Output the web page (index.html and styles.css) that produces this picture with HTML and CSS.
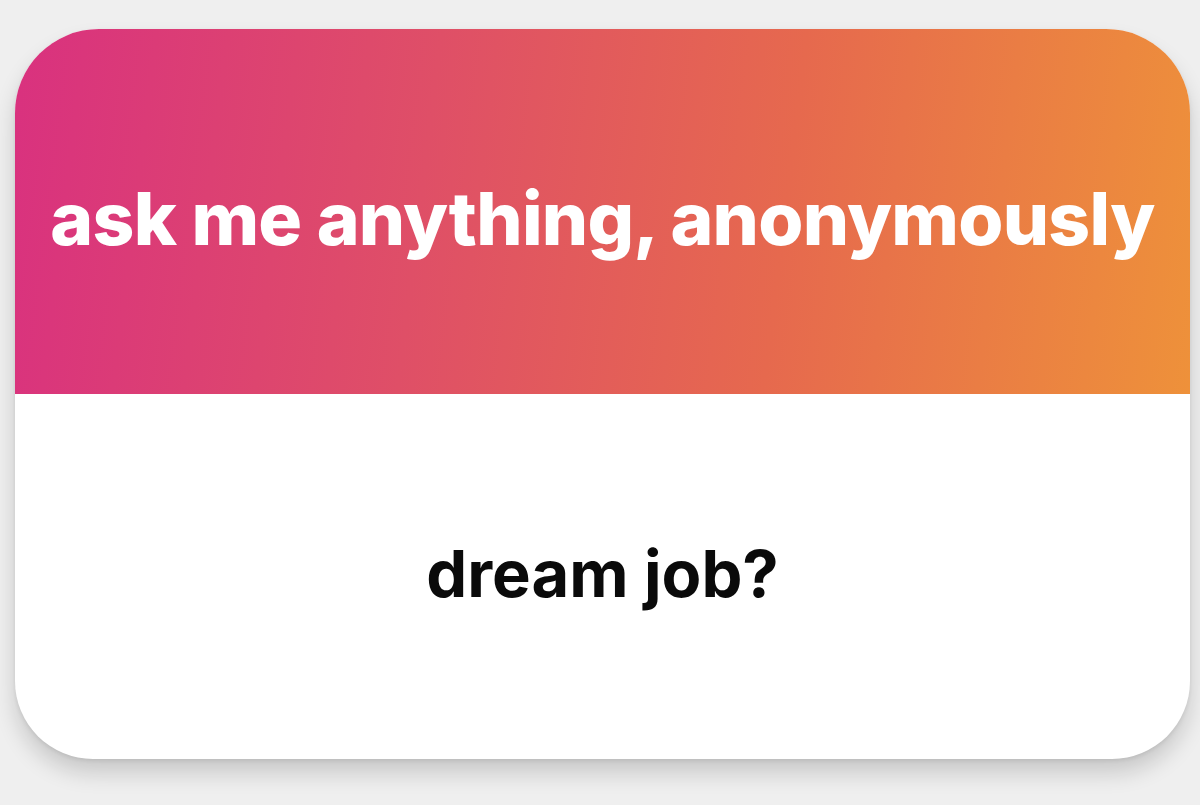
FILE: index.html
```html
<!DOCTYPE html>
<html>
<head>
<meta charset="utf-8">
<link rel="stylesheet" href="styles.css">
</head>
<body>
<div class="page">
  <div class="card">
    <div class="card-head">
      <h1 class="title">ask me anything, anonymously</h1>
    </div>
    <div class="card-body">
      <p class="question">dream job?</p>
    </div>
  </div>
</div>
</body>
</html>
```
FILE: styles.css
```css
html, body {
  margin: 0;
  padding: 0;
  background: #efefef;
}
.page {
  width: 1200px;
  height: 805px;
  padding: 29px 10px 0 15px;
  box-sizing: border-box;
}
.card {
  width: 1175px;
  height: 730px;
  border-radius: 84px 84px 78px 78px;
  overflow: hidden;
  background: #ffffff;
  box-shadow: 0 14px 22px rgba(0,0,0,0.16), 0 2px 4px rgba(0,0,0,0.08);
  display: flex;
  flex-direction: column;
}
.card-head {
  height: 365px;
  background: linear-gradient(97deg, #d9317f 0%, #df4f67 35%, #e6694e 65%, #ee913a 100%);
  display: flex;
  align-items: center;
  justify-content: center;
}
.title {
  margin: 14px 0 0 0;
  font-family: Inter, "Liberation Sans", sans-serif;
  font-weight: 800;
  font-size: 73px;
  letter-spacing: -0.75px;
  color: #ffffff;
  white-space: nowrap;
}
.card-body {
  flex: 1;
  display: flex;
  align-items: center;
  justify-content: center;
}
.question {
  margin: 0 0 6px 0;
  font-family: Inter, "Liberation Sans", sans-serif;
  font-weight: 700;
  font-size: 65px;
  letter-spacing: 0;
  color: #0a0a0a;
}
```
